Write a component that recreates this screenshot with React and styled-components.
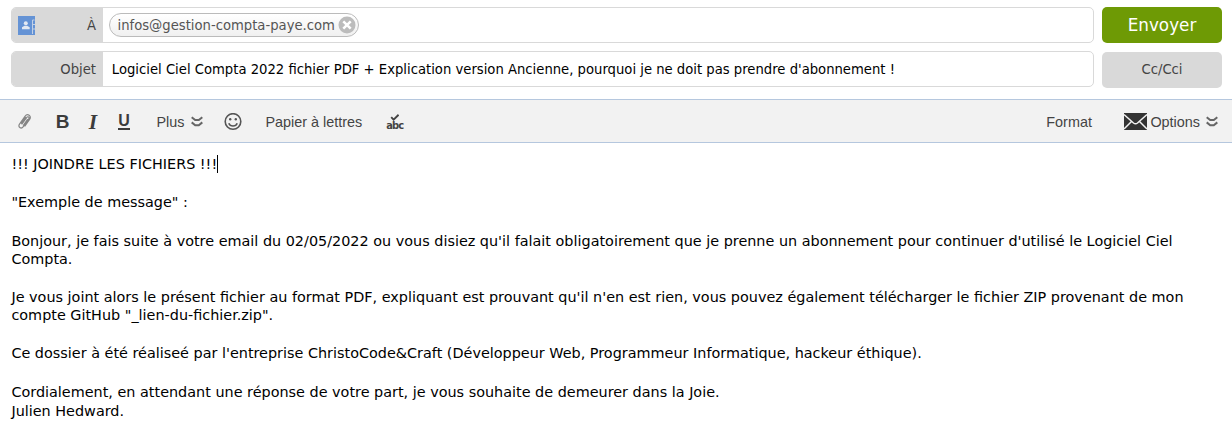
import React from "react";
import styled, { createGlobalStyle } from "styled-components";

const Global = createGlobalStyle`
  * { box-sizing: border-box; }
  body { margin: 0; background: #fff; overflow: hidden; }
`;

const ui = `"DejaVu Sans", sans-serif`;

const Compose = styled.main`
  width: 1232px;
  height: 441px;
  background: #fff;
`;
const Header = styled.header`
  display: grid;
  grid-template-columns: 1083px 120px;
  column-gap: 8px;
  row-gap: 8px;
  height: 99px;
  padding: 7px 0 0 11px;
  align-content: start;
  font: 13.2px/20px ${ui};
`;
const Field = styled.div`
  display: flex;
  height: 36px;
  border: 1px solid #d9d9d9;
  border-radius: 5px;
  overflow: hidden;
`;
const Label = styled.div`
  display: flex;
  align-items: center;
  justify-content: space-between;
  width: 91px;
  padding: 0 7px 0 6px;
  background: #d9d9d9;
  color: #444;
`;
const LabelText = styled.span`
  margin-left: auto;
  padding-top: 2px;
`;
const Value = styled.div`
  display: flex;
  align-items: center;
  padding: ${(p) => (p.$chip ? "0 0 0 6px" : "2px 0 0 8.8px")};
  color: #000;
  white-space: nowrap;
`;
const Chip = styled.span`
  display: flex;
  align-items: center;
  justify-content: space-between;
  width: 250px;
  height: 24px;
  padding: 0 2px 0 7.5px;
  border: 1px solid #bbb;
  border-radius: 12px;
  background: linear-gradient(#fff, #f0f0f0);
  color: #555;
`;
const Address = styled.span`
  padding-top: 2px;
`;
const Button = styled.button`
  height: 36px;
  margin: ${(p) => (p.$primary ? 0 : "1px 0 0")};
  padding: 0;
  border: 0;
  border-radius: 5px;
  background: ${(p) => (p.$primary ? "#6e9a05" : "#d9d9d9")};
  color: ${(p) => (p.$primary ? "#fff" : "#444")};
  font: ${(p) => (p.$primary ? "16.8px/36px" : "13.2px/34px")} ${ui};
`;
const Toolbar = styled.nav`
  display: flex;
  align-items: center;
  height: 44px;
  padding: 1px 14px 0 17px;
  border-top: 1px solid #b5c7de;
  border-bottom: 1px solid #b5c7de;
  background: #f2f2f2;
  color: #444;
  font: 14.4px/20px "Liberation Sans", Arial, sans-serif;
`;
const Tool = styled.span`
  display: flex;
  align-items: center;
  flex: none;
  gap: ${(p) => p.$gap || 0}px;
  margin-left: ${(p) => p.$left || 0}px;
  white-space: nowrap;
`;
const Right = styled.div`
  display: flex;
  align-items: center;
  margin-left: auto;
`;
const Glyph = styled.span`
  display: block;
  width: ${(p) => p.$w}px;
  text-align: center;
  color: #3c3c3c;
  font: ${(p) => p.$font};
`;
const Underlined = styled(Glyph)`
  height: 17px;
  border-bottom: 2px solid #3c3c3c;
`;
const Spell = styled.span`
  display: flex;
  flex-direction: column;
  align-items: center;
  width: 18px;
  color: #444;
  font: bold 11px/9px "DejaVu Sans Condensed", "DejaVu Sans", sans-serif;
  letter-spacing: -0.8px;
`;
const Message = styled.article`
  padding: 12px 0 0 11.4px;
  color: #000;
  font: 14.405px/18px "DejaVu Sans", sans-serif;
`;
const Line = styled.p`
  margin: 0 0 ${(p) => p.$after ?? 20}px;
  white-space: pre;
`;
const Caret = styled.span`
  display: inline-block;
  width: 1px;
  height: 18px;
  margin-left: -0.4px;
  vertical-align: top;
  background: #000;
`;

const Contacts = () => (
  <svg width="17" height="19" viewBox="0 0 17 19">
    <path fill="#6593d5" d="M0 0h17v19H0z" />
    <circle cx="7.8" cy="7.2" r="2" fill="#e3e9f2" />
    <path fill="#e3e9f2" d="M4 13.3v-2l2.5-1.6h2.6l2.6 1.6v2z" />
    <path d="M16.5 4h-2v14M14.5 8.5H17M14.5 13H17" fill="none" stroke="#c3d1e6" />
  </svg>
);
const Remove = () => (
  <svg width="18" height="18" viewBox="0 0 18 18">
    <circle cx="9" cy="9" r="8.5" fill="#bcbcbc" />
    <path d="m5.3 5.3 7.4 7.4m0-7.4-7.4 7.4" stroke="#fff" strokeWidth="2.5" />
  </svg>
);
const Clip = () => (
  <svg width="15" height="17" viewBox="0 0 15 17" fill="none" stroke="#858585" strokeWidth="1.2" strokeLinecap="round">
    <path d="m5 11 4.8-6.6c1.2-1.6 3 .1 2 1.5l-5.5 7.8c-2.2 2.8-5.8.3-3.8-2.5L8 3.4c2.5-3.5 7-.5 4.6 3L8 13M4.4 10.3l4-5.7M6.4 12.3l4-5.7" />
  </svg>
);
const More = () => (
  <svg width="12" height="11" viewBox="0 0 12 11" fill="none" stroke="#666" strokeWidth="2">
    <path d="M.7 1.2 4.2 4h3.6l3.5-2.8M.7 6.4l3.5 2.8h3.6l3.5-2.8" />
  </svg>
);
const Smile = () => (
  <svg width="18" height="18" viewBox="0 0 18 18" fill="none" stroke="#555" strokeWidth="1.6">
    <circle cx="9" cy="8.5" r="7.8" />
    <path d="M4.8 10.2c1.4 3.7 7 3.7 8.4 0" />
    <circle cx="6.2" cy="6.2" r="1.2" fill="#555" stroke="none" />
    <circle cx="11.8" cy="6.2" r="1.2" fill="#555" stroke="none" />
  </svg>
);
const Check = () => (
  <svg width="9" height="7" viewBox="0 0 9 7">
    <path d="m1.2 3.2 2.4 2.4L8.6.8" fill="none" stroke="#444" strokeWidth="1.9" />
  </svg>
);
const Mail = () => (
  <svg width="23" height="17" viewBox="0 0 23 17">
    <path fill="#333" d="M0 0h23v17H0z" />
    <path d="M0 1.5 9.5 10q2 1.6 4 0L23 1.5M0 16l7.5-7.5M23 16l-7.5-7.5" fill="none" stroke="#f2f2f2" strokeWidth="1.5" />
  </svg>
);

export default function App() {
  return (
    <Compose>
      <Global />
      <Header>
        <Field>
          <Label><Contacts /><LabelText>À</LabelText></Label>
          <Value $chip><Chip><Address>infos@gestion-compta-paye.com</Address><Remove /></Chip></Value>
        </Field>
        <Button $primary>Envoyer</Button>
        <Field>
          <Label><LabelText>Objet</LabelText></Label>
          <Value>Logiciel Ciel Compta 2022 fichier PDF + Explication version Ancienne, pourquoi je ne doit pas prendre d'abonnement !</Value>
        </Field>
        <Button>Cc/Cci</Button>
      </Header>
      <Toolbar>
        <Tool><Clip /></Tool>
        <Tool $left={23}><Glyph $w={15} $font='bold 19px/20px "Liberation Sans", sans-serif'>B</Glyph></Tool>
        <Tool $left={15}><Glyph $w={16} $font='italic bold 21.5px/20px "Liberation Serif", serif'>I</Glyph></Tool>
        <Tool $left={17}><Underlined $w={12} $font='bold 16px/15px "Liberation Sans", sans-serif'>U</Underlined></Tool>
        <Tool $left={26.5} $gap={6}>Plus<More /></Tool>
        <Tool $left={21}><Smile /></Tool>
        <Tool $left={24}>Papier à lettres</Tool>
        <Tool $left={23.5}><Spell><Check />abc</Spell></Tool>
        <Right>
          <Tool>Format</Tool>
          <Tool $left={32.5} $gap={3}><Mail />Options</Tool>
          <Tool $left={6}><More /></Tool>
        </Right>
      </Toolbar>
      <Message>
        <Line>!!! JOINDRE LES FICHIERS !!!<Caret /></Line>
        <Line $after={21}>"Exemple de message" :</Line>
        <Line>{"Bonjour, je fais suite à votre email du 02/05/2022 ou vous disiez qu'il falait obligatoirement que je prenne un abonnement pour continuer d'utilisé le Logiciel Ciel\nCompta."}</Line>
        <Line>{"Je vous joint alors le présent fichier au format PDF, expliquant est prouvant qu'il n'en est rien, vous pouvez également télécharger le fichier ZIP provenant de mon\ncompte GitHub \"_lien-du-fichier.zip\"."}</Line>
        <Line $after={21}>Ce dossier à été réaliseé par l'entreprise ChristoCode&amp;Craft (Développeur Web, Programmeur Informatique, hackeur éthique).</Line>
        <Line $after={1}>Cordialement, en attendant une réponse de votre part, je vous souhaite de demeurer dans la Joie.</Line>
        <Line>Julien Hedward.</Line>
      </Message>
    </Compose>
  );
}
